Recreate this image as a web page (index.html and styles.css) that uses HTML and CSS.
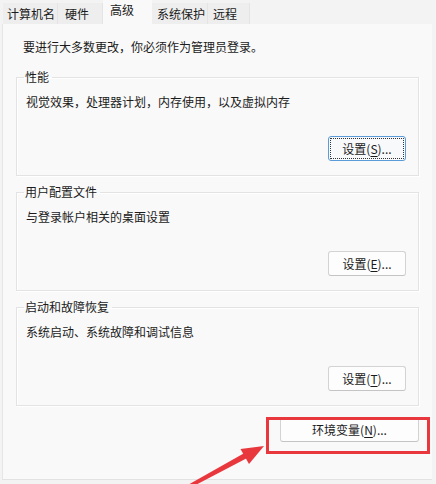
FILE: index.html
```html
<!DOCTYPE html>
<html lang="zh-CN">
<head>
<meta charset="utf-8">
<link rel="stylesheet" href="styles.css">
</head>
<body>
<div class="window">
  <div class="tabs">
    <div class="tab">计算机名</div>
    <div class="tab">硬件</div>
    <div class="tab active">高级</div>
    <div class="tab">系统保护</div>
    <div class="tab">远程</div>
  </div>
  <div class="panel">
    <p class="intro">要进行大多数更改，你必须作为管理员登录。</p>
    <fieldset class="group">
      <legend>性能</legend>
      <p class="desc">视觉效果，处理器计划，内存使用，以及虚拟内存</p>
      <div class="row"><button class="btn focused">设置(<u>S</u>)...</button></div>
    </fieldset>
    <fieldset class="group">
      <legend>用户配置文件</legend>
      <p class="desc">与登录帐户相关的桌面设置</p>
      <div class="row"><button class="btn">设置(<u>E</u>)...</button></div>
    </fieldset>
    <fieldset class="group">
      <legend>启动和故障恢复</legend>
      <p class="desc">系统启动、系统故障和调试信息</p>
      <div class="row"><button class="btn">设置(<u>T</u>)...</button></div>
    </fieldset>
    <div class="env-row">
      <button class="btn env">环境变量(<u>N</u>)...</button>
    </div>
  </div>
  <div class="highlight"></div>
  <svg class="arrow" width="436" height="484" viewBox="0 0 436 484">
    <polygon points="186,486 188,489 251,456 248,451" fill="#e8383d"/>
    <polygon points="264,446 240.5,449 249,464" fill="#e8383d"/>
  </svg>
</div>
</body>
</html>
```
FILE: styles.css
```css
* { box-sizing: border-box; }
html, body {
  margin: 0;
  padding: 0;
}
body {
  width: 436px;
  height: 484px;
  overflow: hidden;
  background: #f3f3f3;
  font-family: "Microsoft YaHei", "Noto Sans CJK SC", "Noto Sans", sans-serif;
  font-size: 12px;
  color: #1b1b1b;
}
.window {
  position: relative;
  width: 436px;
  height: 484px;
}
.tabs {
  display: flex;
  align-items: flex-end;
  height: 24px;
  padding-left: 3px;
}
.tab {
  height: 21px;
  line-height: 21px;
  padding: 0 7px;
  background: #eeeeee;
  border-right: 1px solid #e4e4e4;
  color: #1b1b1b;
  white-space: nowrap;
}
.tab:nth-child(1) { width: 55px; padding: 0 4px; }
.tab:nth-child(2) { width: 45px; }
.tab:nth-child(3) { width: 49px; }
.tab:nth-child(4) { width: 56px; padding: 0 5px; }
.tab:nth-child(5) { width: 42px; padding: 0 5px; }
.tab.active {
  height: 25px;
  margin-bottom: -1px;
  background: #f9f9f9;
  border-right: none;
  line-height: 20px;
  padding-left: 7px;
  position: relative;
  z-index: 1;
}
.panel {
  margin-left: 2px;
  width: 430px;
  height: 456px;
  background: #f9f9f9;
  border-left: 1px solid #e6e6e6;
  border-bottom: 1px solid #e2e2e2;
  padding: 15px 0 0 13px;
}
.intro {
  margin: 0 0 14px 7px;
  line-height: 16px;
}
.group {
  margin: 0 0 8px 0;
  width: 403px;
  padding: 0 12px 14px 9px;
  border: 1px solid #e3e3e3;
  box-shadow: inset 1px 1px 0 #ffffff, 1px 1px 0 #ffffff;
  min-width: 0;
}
.group legend {
  padding: 0 3px 0 1px;
  margin-left: -2px;
  line-height: 16px;
  color: #1b1b1b;
}
.desc {
  margin: 9px 0 0 0;
  line-height: 16px;
}
.row {
  display: flex;
  justify-content: flex-end;
  margin-top: 26px;
}
.btn {
  font: inherit;
  color: #1b1b1b;
  width: 78px;
  height: 25px;
  padding: 0;
  background: #fdfdfd;
  border: 1px solid #d3d3d3;
  border-bottom-color: #c4c4c4;
  border-radius: 3px;
  line-height: 22px;
}
.btn u { text-decoration-thickness: 1px; text-underline-offset: 2px; }
.btn.focused {
  border: 1px solid #5a9bd8;
  outline: 1px dotted #333;
  outline-offset: -3px;
  background: #f7f9fb;
}
.env-row {
  display: flex;
  justify-content: flex-end;
  padding-right: 13px;
  margin-top: 11px;
}
.btn.env {
  width: 139px;
}
.highlight {
  position: absolute;
  left: 266px;
  top: 417px;
  width: 164px;
  height: 37px;
  border: 3px solid #e8383d;
}
.arrow {
  position: absolute;
  left: 0;
  top: 0;
  pointer-events: none;
}
```
